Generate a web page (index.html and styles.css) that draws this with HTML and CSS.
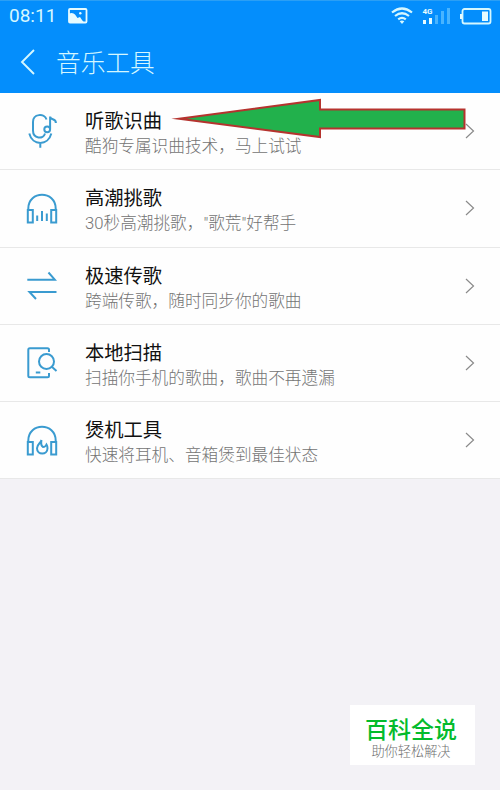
FILE: index.html
```html
<!DOCTYPE html>
<html lang="zh-CN">
<head>
    <meta charset="UTF-8">
    <meta name="viewport" content="width=device-width, initial-scale=1.0">
    <title>音乐工具</title>
    <link rel="stylesheet" href="styles.css">
</head>
<body>
    <header>
        <div class="status-bar">
            <span class="time">08:11</span>
            <svg class="photo" width="20" height="16" viewBox="0 0 20 16">
                <rect x="1" y="1" width="17.5" height="13.5" rx="1" fill="none" stroke="#e6fbff" stroke-width="1.8"/>
                <path d="M1 5.5q4-1.5 6 1l2.5 3.5 2.5-1 2 3 2 2.5H1z" fill="#e6fbff"/>
                <circle cx="12.3" cy="5.2" r="1.2" fill="#e6fbff"/>
            </svg>
            <svg class="signals" width="101" height="20" viewBox="0 0 101 20">
                <g fill="none" stroke="#d5f7ff" stroke-width="2.2">
                    <path d="M1 6.5q10-8 20 0"/>
                    <path d="M4 10q7-5.5 14 0"/>
                    <path d="M7.2 13.3q3.8-3 7.6 0"/>
                </g>
                <path d="M8.7 15.3q2.3-1.6 4.6 0L11 18z" fill="#d5f7ff"/>
                <text class="network" x="31.5" y="8">4G</text>
                <path d="M32 14h3v4h-3zM38 12h3v6h-3z" fill="#e6fbff"/>
                <path d="M44 9h3v9h-3zM50 5h3v13h-3zM56 2h3v16h-3z" fill="#48b4ff"/>
                <rect x="71.5" y="3" width="28" height="14.5" rx="2" fill="none" stroke="#d5f7ff" stroke-width="1.8"/>
                <path d="M69 8h2v5h-2zM91 5.5h6v9.5h-6z" fill="#e6fbff"/>
            </svg>
        </div>
        <div class="title-bar">
            <svg width="16" height="26" viewBox="0 0 16 26">
                <path d="M14 1L2 13l12 12" fill="none" stroke="#d5f7ff" stroke-width="1.9"/>
            </svg>
            <h1>音乐工具</h1>
        </div>
    </header>

    <main class="tools">
        <div class="tool">
            <svg class="icon" viewBox="0 0 32 36">
                <path d="M20.5 6.5C18.5 0 7 .5 7 9v8.5c0 8.500 10.5 9 12 3"/>
                <circle cx="21.2" cy="16.3" r="2.9"/>
                <path d="M24.100 16.300V3.500c0 4 6 1.500 5.800 6.500M3.300 20.500c3 12.500 19 12.500 22 0M14.300 30v4.800"/>
            </svg>
            <div class="text">
                <h2>听歌识曲</h2>
                <p>酷狗专属识曲技术，马上试试</p>
            </div>
            <svg class="arrow" viewBox="0 0 10 16"><path d="M1 1l7.5 7L1 15"/></svg>
            <svg class="pointer" width="294" height="42" viewBox="0 0 294 42">
                <path d="M6 20.800L147 2v9.500h144.500v19H147V39z"/>
            </svg>
        </div>
        <div class="tool">
            <svg class="icon" viewBox="0 0 32 36">
                <path d="M2.300 20v-1.500C2.300 .2 29.700 .2 29.700 18.500V20M1.800 20h5v12.500h-5zM25.200 20h5v12.500h-5zM11.200 25.500v5.500M16 21v10M20.800 23.500v7.500"/>
            </svg>
            <div class="text">
                <h2>高潮挑歌</h2>
                <p>30秒高潮挑歌，"歌荒"好帮手</p>
            </div>
            <svg class="arrow" viewBox="0 0 10 16"><path d="M1 1l7.5 7L1 15"/></svg>
        </div>
        <div class="tool">
            <svg class="icon" viewBox="0 0 32 36">
                <path d="M1.300 11.700h27.500L22.500 4.500M30.500 24H3.500l6.500 7"/>
            </svg>
            <div class="text">
                <h2>极速传歌</h2>
                <p>跨端传歌，随时同步你的歌曲</p>
            </div>
            <svg class="arrow" viewBox="0 0 10 16"><path d="M1 1l7.5 7L1 15"/></svg>
        </div>
        <div class="tool">
            <svg class="icon" viewBox="0 0 32 36">
                <path d="M23 7V4.800q0-1.500-1.500-1.500H3.800q-1.500 0-1.500 1.500v26q0 1.500 1.500 1.500h17.700q1.500 0 1.500-1.500V28M9.800 27.500h4.500"/>
                <circle cx="20.5" cy="16.5" r="7.5"/>
                <path d="M25.800 21.800l4.700 4.200"/>
            </svg>
            <div class="text">
                <h2>本地扫描</h2>
                <p>扫描你手机的歌曲，歌曲不再遗漏</p>
            </div>
            <svg class="arrow" viewBox="0 0 10 16"><path d="M1 1l7.5 7L1 15"/></svg>
        </div>
        <div class="tool">
            <svg class="icon" viewBox="0 0 32 36">
                <path d="M2.300 20v-1.500C2.300 .2 29.700 .2 29.700 18.500V20M1.800 20h5v12.500h-5zM25.200 20h5v12.500h-5z"/>
                <path d="M15.500 18c-.5 3-4.500 4-4.500 8.200 0 7 10.500 7 10.500 0 0-1.700-.3-2.700-1-3.700-.7 1.800-1.700 2.500-3.500 2.500-2-1.500-2.200-4-1.500-7z"/>
            </svg>
            <div class="text">
                <h2>煲机工具</h2>
                <p>快速将耳机、音箱煲到最佳状态</p>
            </div>
            <svg class="arrow" viewBox="0 0 10 16"><path d="M1 1l7.5 7L1 15"/></svg>
        </div>
    </main>

    <div class="badge">
        <strong>百科全说</strong>
        <span>助你轻松解决</span>
    </div>
</body>
</html>
```
FILE: styles.css
```css
* {
    box-sizing: border-box;
}
body {
    margin: 0;
    height: 790px;
    position: relative;
    overflow: hidden;
    background-color: #f3f2f6;
    font-family: "Noto Sans CJK SC", sans-serif;
}
h1, h2, p {
    margin: 0;
}
header {
    height: 93px;
    background-color: #048efc;
    border-top: 1px solid #2b9ff5;
}
.status-bar {
    height: 30px;
    display: flex;
    align-items: center;
    padding: 0 8px 0 9px;
}
.time {
    font-family: Roboto, sans-serif;
    font-size: 19px;
    line-height: 30px;
    color: #d5f7ff;
    width: 59px;
}
.network {
    font: bold 8px Roboto, sans-serif;
    fill: #e6fbff;
}
.signals {
    margin-left: auto;
}
.title-bar {
    display: flex;
    align-items: center;
    height: 62px;
    padding-left: 20px;
}
h1 {
    margin-left: 20px;
    padding-bottom: 2px;
    font-size: 24.7px;
    font-weight: 300;
    line-height: 36px;
    color: #d5f7ff;
}
.tools {
    background-color: #fefefe;
}
.tool {
    position: relative;
    display: flex;
    align-items: center;
    height: 77.3px;
    padding: 0 25px 0 26px;
    border-bottom: 1px solid #e8e8e8;
}
.icon {
    width: 32px;
    height: 36px;
    fill: none;
    stroke: #3a9bd0;
    stroke-width: 2;
}
.text {
    flex: 1;
    margin-left: 27px;
    padding-top: 4px;
}
h2 {
    font-size: 19.3px;
    font-weight: 400;
    line-height: 26px;
    color: #111;
}
p {
    padding-top: 2px;
    font-family: Roboto, "Noto Sans CJK SC", sans-serif;
    font-size: 16.67px;
    font-weight: 300;
    line-height: 24px;
    color: #747474;
}
.arrow {
    width: 10px;
    height: 16px;
    fill: none;
    stroke: #8a8a8a;
    stroke-width: 1.2;
}
/* green arrow laid over the first row */
.pointer {
    position: absolute;
    left: 173px;
    top: 5px;
    overflow: visible;
    fill: #22b14c;
    stroke: #b5332e;
    stroke-width: 2;
    stroke-miterlimit: 20;
}
.badge {
    position: absolute;
    left: 350px;
    top: 705px;
    width: 125px;
    height: 60px;
    padding: 9px 3px 0 0;
    background-color: #fff;
    text-align: center;
}
.badge strong {
    display: block;
    font-size: 23px;
    font-weight: 500;
    line-height: 29px;
    color: #04bb2c;
}
.badge span {
    display: block;
    font-size: 13.2px;
    font-weight: 300;
    line-height: 16px;
    color: #707070;
}
```
